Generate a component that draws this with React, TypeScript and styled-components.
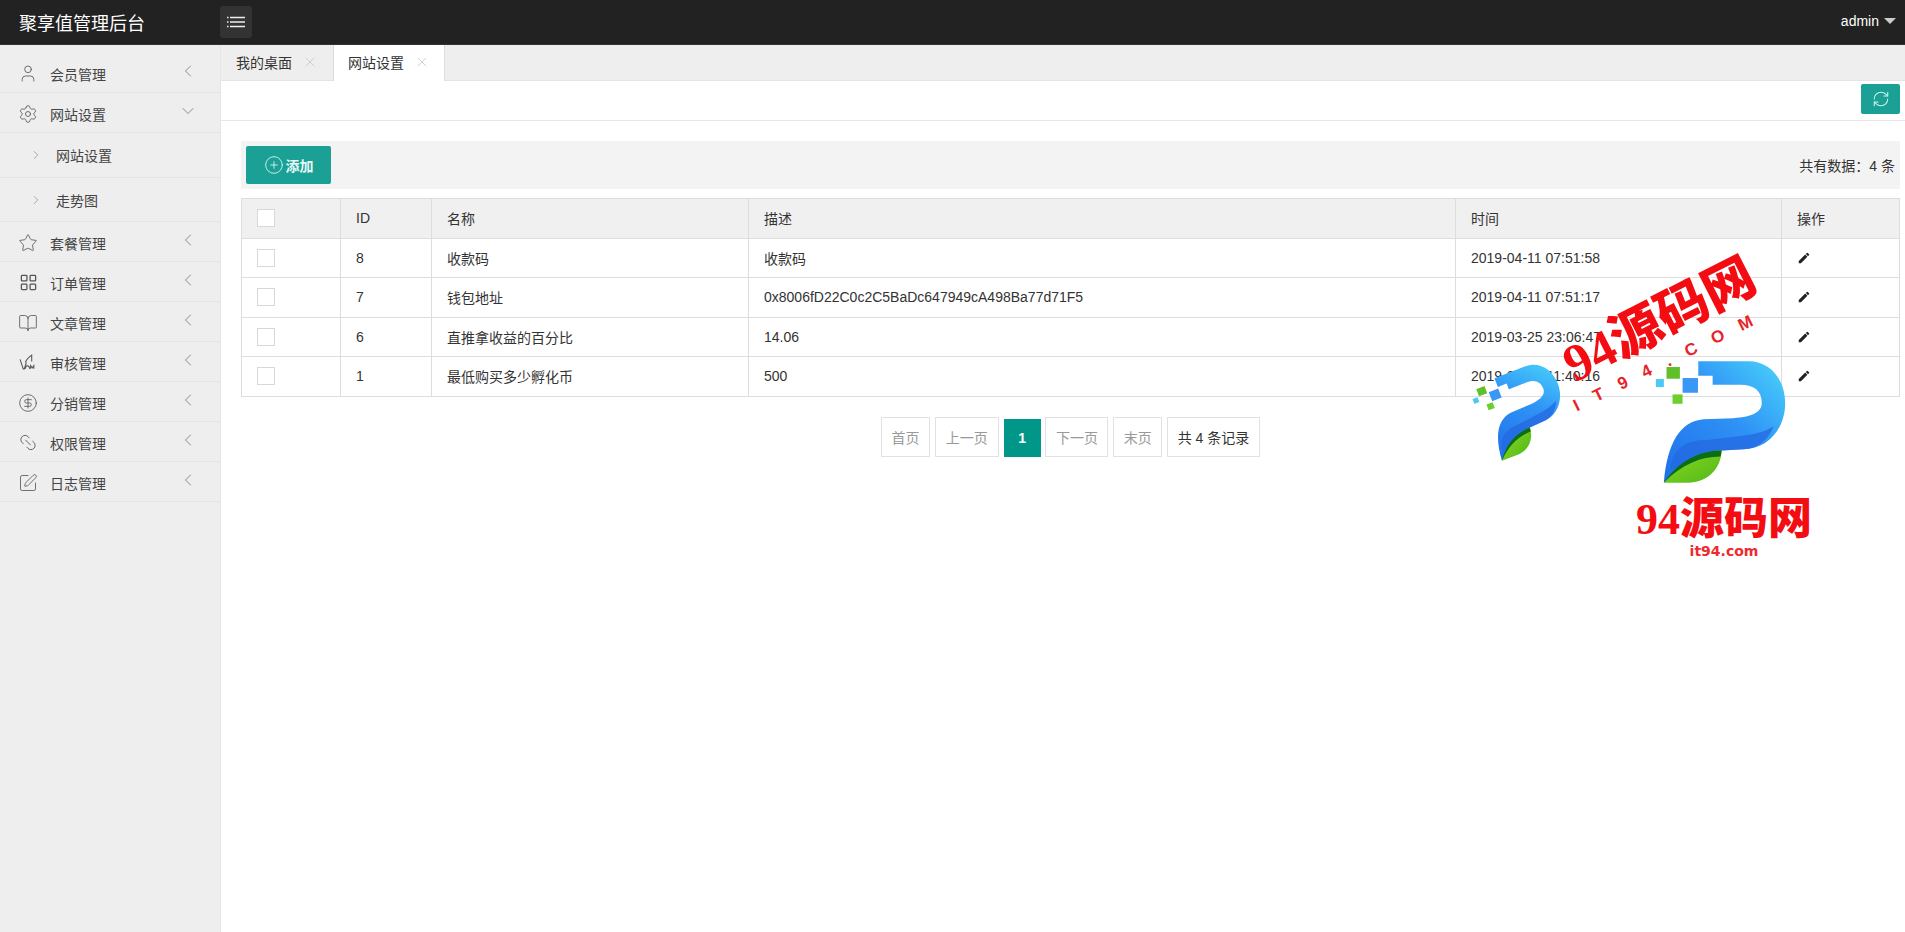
import type { FC, ReactNode } from "react";
import styled, { createGlobalStyle } from "styled-components";
import {
  BookOpen,
  ChevronDown,
  ChevronLeft,
  ChevronRight,
  CircleDollarSign,
  CirclePlus,
  LayoutGrid,
  Link2,
  RefreshCw,
  Settings,
  SquarePen,
  Star,
  User,
  X,
} from "lucide-react";
import { MdEdit } from "react-icons/md";

const FONT = `"Liberation Sans", "Noto Sans CJK SC", sans-serif`;
const TEAL = "#1aa094";

const GlobalStyle = createGlobalStyle`
  html, body {
    margin: 0;
    padding: 0;
    background: #fff;
  }
  body {
    font-family: ${FONT};
    font-size: 14px;
    color: #333;
    overflow: hidden;
  }
`;

const Page = styled.div`
  position: relative;
  height: 932px;
  overflow: hidden;
  display: flex;
  flex-direction: column;
`;

const Header = styled.header`
  height: 45px;
  flex: none;
  box-sizing: border-box;
  border-bottom: 1px solid #333;
  background: #222;
  display: flex;
  align-items: center;
  padding: 0 9px 0 19px;
`;

const Title = styled.div`
  width: 201px;
  font-size: 18px;
  color: #fff;
`;

const MenuToggle = styled.button`
  width: 32px;
  height: 32px;
  padding: 0;
  border: 0;
  border-radius: 3px;
  background: #333;
  color: #eee;
  display: flex;
  align-items: center;
  justify-content: center;
`;

const UserMenu = styled.div`
  margin-left: auto;
  color: #fff;
  display: flex;
  align-items: center;
  gap: 5px;
  margin-top: -2px;
`;

const Caret = styled.span`
  width: 0;
  height: 0;
  border-left: 6px solid transparent;
  border-right: 6px solid transparent;
  border-top: 6px solid #ccc;
`;

const Body = styled.div`
  flex: 1;
  display: flex;
  min-height: 0;
`;

const Sidebar = styled.aside`
  width: 221px;
  flex: none;
  box-sizing: border-box;
  padding-top: 8px;
  background: #eee;
  border-right: 1px solid #e6e6e6;
`;

const NavRow = styled.div`
  height: 40px;
  box-sizing: border-box;
  border-bottom: 1px solid #e4e4e4;
  display: flex;
  align-items: center;
  padding: 2px 0 0 18px;
  color: #555;
`;

const NavIcon = styled.span`
  width: 20px;
  height: 20px;
  display: flex;
  align-items: center;
  justify-content: center;
  color: #555;
`;

const NavLabel = styled.span`
  margin-left: 12px;
  width: 128px;
  color: #444;
`;

const NavArrow = styled.span`
  display: flex;
  margin-top: -6px;
  color: #777;
`;

const SubRow = styled.div<{ $height: number }>`
  height: ${(p) => p.$height}px;
  box-sizing: border-box;
  border-bottom: 1px solid #e4e4e4;
  display: flex;
  align-items: center;
  padding-left: 29px;
  color: #444;
  gap: 13px;

  svg {
    color: #777;
  }
`;

const Main = styled.main`
  flex: 1;
  min-width: 0;
  display: flex;
  flex-direction: column;
`;

const TabBar = styled.div`
  height: 36px;
  flex: none;
  background: #eee;
  display: flex;
  border-bottom: 1px solid #e4e4e4;
  box-sizing: border-box;
`;

const Tab = styled.div<{ $active?: boolean }>`
  width: 112px;
  height: 36px;
  box-sizing: border-box;
  padding: 0 0 2px ${(p) => (p.$active ? 14 : 15)}px;
  display: flex;
  align-items: center;
  gap: 10px;
  color: #333;
  background: ${(p) => (p.$active ? "#fff" : "transparent")};
  border-left: ${(p) => (p.$active ? "1px solid #ddd" : "0")};
  border-right: ${(p) => (p.$active ? "1px solid #ddd" : "0")};

  svg {
    color: #bbb;
  }
`;

const ActionBar = styled.div`
  height: 40px;
  flex: none;
  box-sizing: border-box;
  border-bottom: 1px solid #e6e6e6;
  display: flex;
  justify-content: flex-end;
  padding: 3px 5px 0 0;
`;

const RefreshButton = styled.button`
  width: 39px;
  height: 30px;
  padding: 0;
  border: 0;
  border-radius: 2px;
  background: ${TEAL};
  color: #c8f5ef;
  display: flex;
  align-items: center;
  justify-content: center;
`;

const Content = styled.div`
  padding: 20px 5px 0 20px;
`;

const Toolbar = styled.div`
  height: 48px;
  background: #f3f3f3;
  display: flex;
  align-items: center;
  justify-content: space-between;
  padding: 0 5px;
  margin-bottom: 9px;
`;

const AddButton = styled.button`
  width: 85px;
  height: 38px;
  padding: 0;
  border: 0;
  border-radius: 2px;
  background: ${TEAL};
  color: #e4fbf8;
  font: bold 14px ${FONT};
  display: flex;
  align-items: center;
  justify-content: center;
  gap: 2px;
`;

const Total = styled.span`
  color: #333;
`;

const Table = styled.table`
  width: 1658px;
  table-layout: fixed;
  border-collapse: collapse;
  border: 1px solid #ddd;

  th, td {
    height: 39.5px;
    box-sizing: border-box;
    padding: 0 15px;
    border: 1px solid #ddd;
    text-align: left;
    font-weight: normal;
    color: #333;
  }

  th {
    background: #f0f0f0;
  }
`;

const CheckBox = styled.span`
  display: block;
  width: 16px;
  height: 16px;
  border: 1px solid #d8d8d8;
  background: #fff;
`;

const Pager = styled.nav`
  display: flex;
  justify-content: center;
  gap: 4.800px;
  margin-top: 20px;
`;

const PageItem = styled.span<{ $width: number; $dark?: boolean }>`
  width: ${(p) => p.$width}px;
  height: 40px;
  box-sizing: border-box;
  border: 1px solid #e2e2e2;
  display: flex;
  align-items: center;
  justify-content: center;
  color: ${(p) => (p.$dark ? "#333" : "#999")};
`;

const CurrentPage = styled.span`
  width: 37px;
  height: 38px;
  margin-top: 2px;
  background: #009688;
  color: #fff;
  font-weight: bold;
  display: flex;
  align-items: center;
  justify-content: center;
`;

/* the watermark stamped over the screenshot */
const Stamp = styled.div<{ $x: number; $y: number; $w: number; $h: number; $rotate?: number }>`
  position: absolute;
  left: ${(p) => p.$x}px;
  top: ${(p) => p.$y}px;
  width: ${(p) => p.$w}px;
  height: ${(p) => p.$h}px;
  transform: rotate(${(p) => p.$rotate ?? 0}deg);
  display: flex;
  align-items: center;
  justify-content: center;
  white-space: nowrap;
  color: #f30d12;
  font-family: "Liberation Serif", "Noto Sans CJK SC", serif;
  font-weight: bold;
`;

const StampTitle = styled.span<{ $size: number }>`
  font-size: ${(p) => p.$size}px;
  font-weight: 900;
`;

const StampSpaced = styled.span`
  font: bold 17px ${FONT};
  letter-spacing: 17px;
  color: #e8242a;
`;

const StampDomain = styled.span`
  font: bold 14px "DejaVu Sans", sans-serif;
  color: #ee2a2e;
`;

const LogoMark: FC<{ id: string }> = ({ id }) => (
  <svg width="100%" height="100%" viewBox="640 355 400 380">
    <defs>
      <linearGradient id={`${id}-a`} x1="0" y1="1" x2="1" y2="0">
        <stop offset="0" stopColor="#1f6fe8" />
        <stop offset="0.55" stopColor="#2f92f6" />
        <stop offset="1" stopColor="#4ad4fb" />
      </linearGradient>
      <linearGradient id={`${id}-b`} x1="0" y1="0" x2="1" y2="1">
        <stop offset="0" stopColor="#8ed81e" />
        <stop offset="1" stopColor="#4fb81a" />
      </linearGradient>
    </defs>
    <path
      d="M775 365H925C995 365 1035 425 1035 490C1035 570 980 628 910 628L845 632L672 728C682 610 720 545 790 538L880 535C940 532 965 515 965 490C965 455 945 435 900 435H818V408H775Z"
      fill={`url(#${id}-a)`}
    />
    <path d="M1000 560C985 600 950 628 910 628L845 632L690 690C700 620 740 600 800 600L890 590C940 585 975 575 1000 560Z" fill="#2468e0" opacity="0.75" />
    <path d="M672 728C720 670 780 635 845 632C842 690 800 728 745 728Z" fill={`url(#${id}-b)`} />
    <path d="M672 728C715 665 775 633 845 632L842 650C780 650 725 675 672 728Z" fill="#0a6e12" />
    <rect x="680" y="382" width="40" height="35" fill="#5fc02a" />
    <rect x="648" y="418" width="24" height="24" fill="#4cc8f5" />
    <rect x="728" y="415" width="46" height="44" fill="#3b97f5" />
    <rect x="698" y="464" width="30" height="28" fill="#6fcf2a" />
  </svg>
);

const AuditIcon: FC = () => (
  <svg width="18" height="17" viewBox="0 0 17 16" fill="none" stroke="currentColor" strokeWidth="1">
    <path d="M1 5l3 9h1l2-6" />
    <path d="M6 8c1-3 3-5 6-7v6" />
    <path d="M6 14c0-2 1-3 2-3s2 1 2 3M11 14v-3l1.500 2 1.500-2v3" />
  </svg>
);

const navTop: [ReactNode, string][] = [[<User size={21} strokeWidth={1} />, "会员管理"]];

const navRest: [ReactNode, string][] = [
  [<Star size={20} strokeWidth={1} />, "套餐管理"],
  [<LayoutGrid size={19} strokeWidth={1.6} />, "订单管理"],
  [<BookOpen size={20} strokeWidth={1} />, "文章管理"],
  [<AuditIcon />, "审核管理"],
  [<CircleDollarSign size={20} strokeWidth={1} />, "分销管理"],
  [<Link2 size={21} strokeWidth={1} style={{ transform: "rotate(45deg)" }} />, "权限管理"],
  [<SquarePen size={20} strokeWidth={1} />, "日志管理"],
];

const rows = [
  { id: 8, name: "收款码", desc: "收款码", time: "2019-04-11 07:51:58" },
  { id: 7, name: "钱包地址", desc: "0x8006fD22C0c2C5BaDc647949cA498Ba77d71F5", time: "2019-04-11 07:51:17" },
  { id: 6, name: "直推拿收益的百分比", desc: "14.06", time: "2019-03-25 23:06:47" },
  { id: 1, name: "最低购买多少孵化币", desc: "500", time: "2019-03-22 11:40:16" },
];

const NavItem: FC<{ icon: ReactNode; label: string; open?: boolean }> = ({ icon, label, open }) => (
  <NavRow>
    <NavIcon>{icon}</NavIcon>
    <NavLabel>{label}</NavLabel>
    <NavArrow>
      {open ? <ChevronDown size={20} strokeWidth={1} /> : <ChevronLeft size={20} strokeWidth={1} />}
    </NavArrow>
  </NavRow>
);

const App: FC = () => {
  return (
    <Page>
      <GlobalStyle />
      <Header>
        <Title>聚享值管理后台</Title>
        <MenuToggle>
          <svg width="18" height="12" viewBox="0 0 18 12" stroke="currentColor" strokeWidth="1.4">
            <path d="M0 1.500h1.500M3 1.500h15M0 6h1.500M3 6h15M0 10.500h1.500M3 10.500h15" />
          </svg>
        </MenuToggle>
        <UserMenu>
          admin
          <Caret />
        </UserMenu>
      </Header>
      <Body>
        <Sidebar>
          {navTop.map(([icon, label]) => (
            <NavItem key={label} icon={icon} label={label} />
          ))}
          <NavItem icon={<Settings size={20} strokeWidth={1} />} label="网站设置" open />
          <SubRow $height={45}>
            <ChevronRight size={14} strokeWidth={1} />
            网站设置
          </SubRow>
          <SubRow $height={44}>
            <ChevronRight size={14} strokeWidth={1} />
            走势图
          </SubRow>
          {navRest.map(([icon, label]) => (
            <NavItem key={label} icon={icon} label={label} />
          ))}
        </Sidebar>
        <Main>
          <TabBar>
            <Tab>
              我的桌面
              <X size={16} strokeWidth={1} />
            </Tab>
            <Tab $active>
              网站设置
              <X size={16} strokeWidth={1} />
            </Tab>
          </TabBar>
          <ActionBar>
            <RefreshButton>
              <RefreshCw size={18} strokeWidth={1.4} />
            </RefreshButton>
          </ActionBar>
          <Content>
            <Toolbar>
              <AddButton>
                <CirclePlus size={20} strokeWidth={1} />
                添加
              </AddButton>
              <Total>共有数据：4 条</Total>
            </Toolbar>
            <Table>
              <colgroup>
                <col width="99" />
                <col width="91" />
                <col width="317" />
                <col width="707" />
                <col width="326" />
                <col width="118" />
              </colgroup>
              <thead>
                <tr>
                  <th>
                    <CheckBox />
                  </th>
                  <th>ID</th>
                  <th>名称</th>
                  <th>描述</th>
                  <th>时间</th>
                  <th>操作</th>
                </tr>
              </thead>
              <tbody>
                {rows.map((row) => (
                  <tr key={row.id}>
                    <td>
                      <CheckBox />
                    </td>
                    <td>{row.id}</td>
                    <td>{row.name}</td>
                    <td>{row.desc}</td>
                    <td>{row.time}</td>
                    <td>
                      <MdEdit size={14} color="#222" style={{ display: "block" }} />
                    </td>
                  </tr>
                ))}
              </tbody>
            </Table>
            <Pager>
              <PageItem $width={49}>首页</PageItem>
              <PageItem $width={64}>上一页</PageItem>
              <CurrentPage>1</CurrentPage>
              <PageItem $width={63}>下一页</PageItem>
              <PageItem $width={49}>末页</PageItem>
              <PageItem $width={93} $dark>
                共 4 条记录
              </PageItem>
            </Pager>
          </Content>
        </Main>
      </Body>

      <Stamp $x={1478} $y={368} $w={88} $h={84} $rotate={-21}>
        <LogoMark id="small" />
      </Stamp>
      <Stamp $x={1653} $y={358} $w={134} $h={127}>
        <LogoMark id="big" />
      </Stamp>
      <Stamp $x={1537} $y={285} $w={240} $h={60} $rotate={-27}>
        <StampTitle $size={52}>94源码网</StampTitle>
      </Stamp>
      <Stamp $x={1531} $y={348} $w={280} $h={24} $rotate={-26}>
        <StampSpaced>IT94.COM</StampSpaced>
      </Stamp>
      <Stamp $x={1624} $y={487} $w={200} $h={56}>
        <StampTitle $size={44}>94源码网</StampTitle>
      </Stamp>
      <Stamp $x={1664} $y={541} $w={120} $h={20}>
        <StampDomain>it94.com</StampDomain>
      </Stamp>
    </Page>
  );
};

export default App;
